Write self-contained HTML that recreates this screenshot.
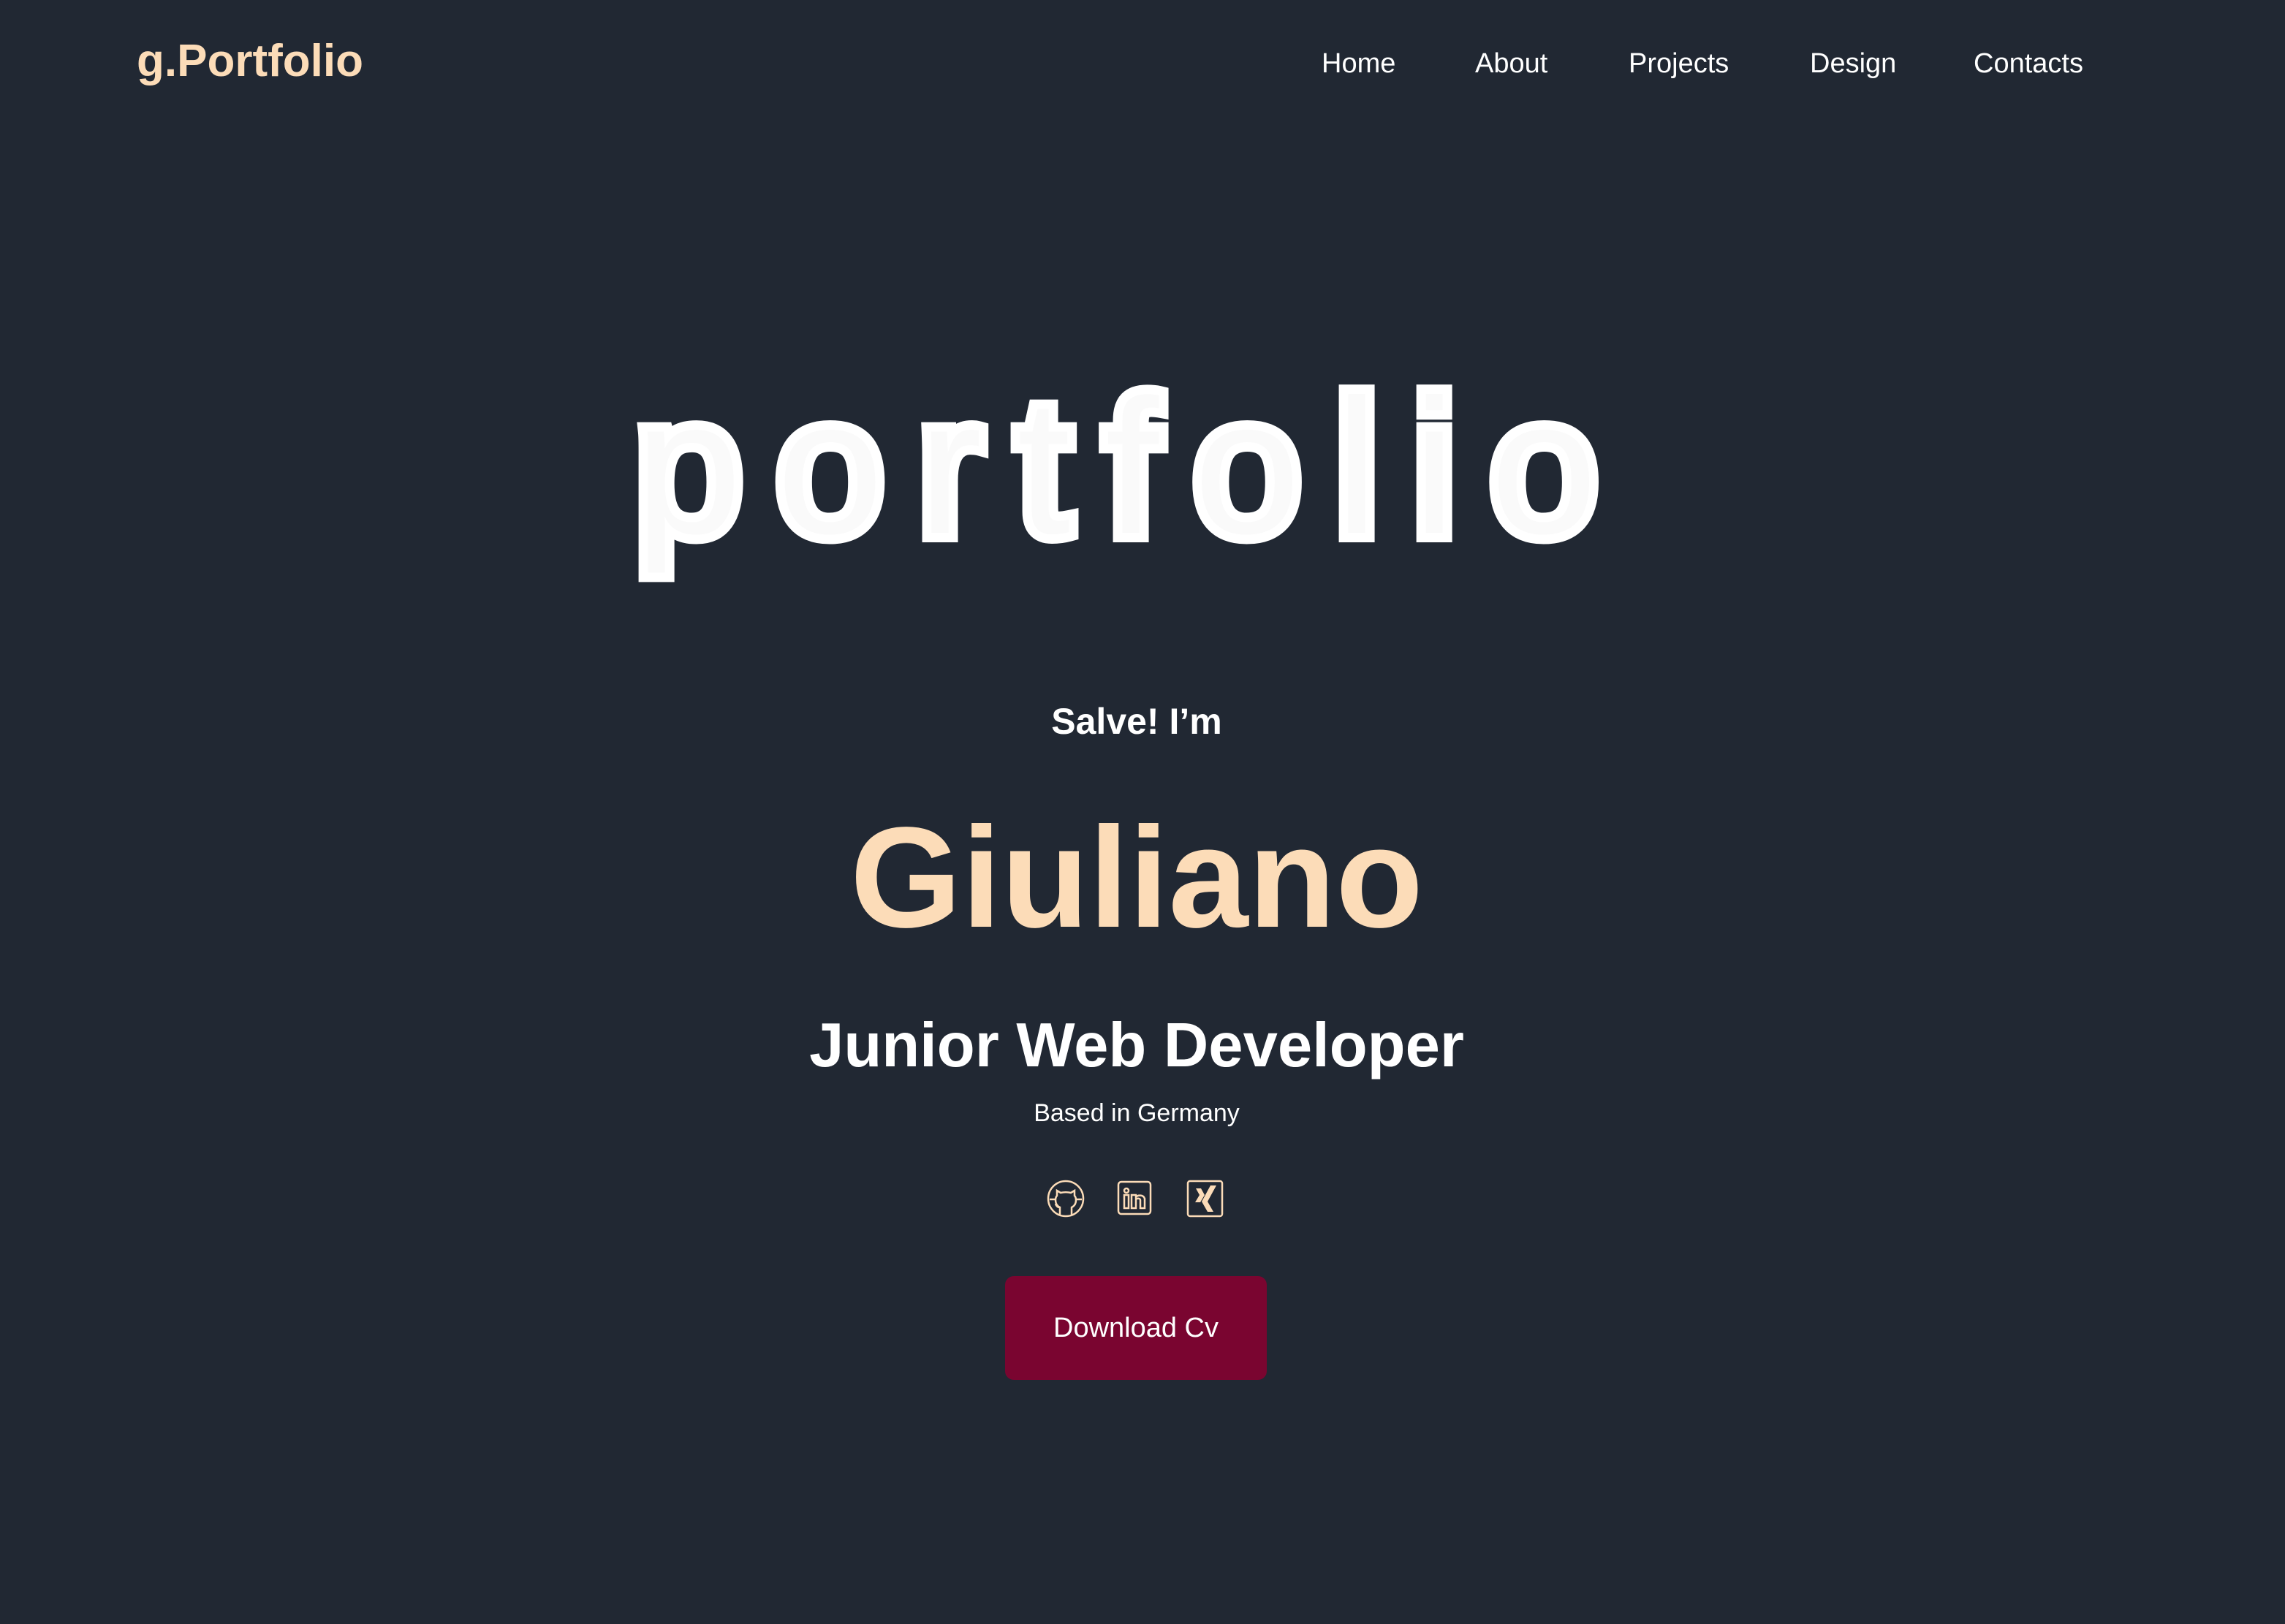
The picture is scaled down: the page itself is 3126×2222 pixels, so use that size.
<!DOCTYPE html>
<html><head><meta charset="utf-8"><style>
html,body{margin:0;padding:0}
body{width:3126px;height:2222px;background:#212833;font-family:"Liberation Sans",sans-serif;color:#fff;position:relative;overflow:hidden}
.abs{position:absolute;white-space:nowrap}
.logo{left:187px;top:48px;font-size:62px;font-weight:bold;color:#fcdcb8;letter-spacing:0px}
.nav{top:66px;font-size:38px;color:#fff}
.big{left:0;width:3102px;text-align:center;top:488px;font-size:262px;font-weight:normal;color:#fafafa;letter-spacing:48px;-webkit-text-stroke:26px #fff;paint-order:stroke fill;stroke-linejoin:round}
.c{left:0;width:3110px;text-align:center}
</style></head><body>
<div class="abs logo">g.Portfolio</div>
<div class="abs nav" style="left:1808px">Home</div>
<div class="abs nav" style="left:2018px">About</div>
<div class="abs nav" style="left:2228px">Projects</div>
<div class="abs nav" style="left:2476px">Design</div>
<div class="abs nav" style="left:2700px">Contacts</div>

<div class="abs big">portfolio</div>
<div class="abs c" style="top:958px;font-size:50px;font-weight:bold">Salve! I’m</div>
<div class="abs c" style="top:1088px;font-size:196px;font-weight:bold;color:#fcdcb8;letter-spacing:0px">Giuliano</div>
<div class="abs c" style="top:1382px;font-size:85px;font-weight:bold">Junior Web Developer</div>
<div class="abs c" style="top:1504px;font-size:34px">Based in Germany</div>

<svg class="abs" style="left:1432px;top:1614px" width="52" height="52" viewBox="0 0 52 52" fill="none" stroke="#fcdcb8" stroke-width="2.5">
<circle cx="26" cy="26" r="24"/>
<path d="M18 48V38c-3 0-5-2-6-5M34 48V38c4-2 6-5 6-10 0-3-1-5-2-6l0-7-5 3c-4-1-10-1-14 0l-5-3v7c-1 1-2 3-2 6 0 5 2 8 6 10v10"/>
<path d="M4 27h8M40 27h8"/>
</svg>
<svg class="abs" style="left:1528px;top:1615px" width="50" height="50" viewBox="0 0 50 50" fill="none" stroke="#fcdcb8" stroke-width="2.5">
<rect x="2" y="2" width="44" height="44" rx="4"/>
<circle cx="13" cy="14" r="3"/>
<path d="M10 20h6v18h-6zM20 20h6v3c2-3 10-4 12 2v13h-6V27c0-3-6-3-6 0v11h-6z"/>
</svg>
<svg class="abs" style="left:1623px;top:1614px" width="52" height="52" viewBox="0 0 52 52" fill="#fcdcb8" stroke="#fcdcb8" stroke-width="2.5">
<rect x="2" y="2" width="47" height="48" rx="3" fill="none"/>
<path d="M13 12h7l5 9-6 10h-7l6-10zM33 8h8L29 30l8 14h-8l-8-14z" stroke="none"/>
</svg>

<div class="abs" style="left:1375px;top:1746px;width:358px;height:142px;background:#7a0530;border-radius:12px;font-size:38px;text-align:center;line-height:142px">Download Cv</div>
</body></html>
